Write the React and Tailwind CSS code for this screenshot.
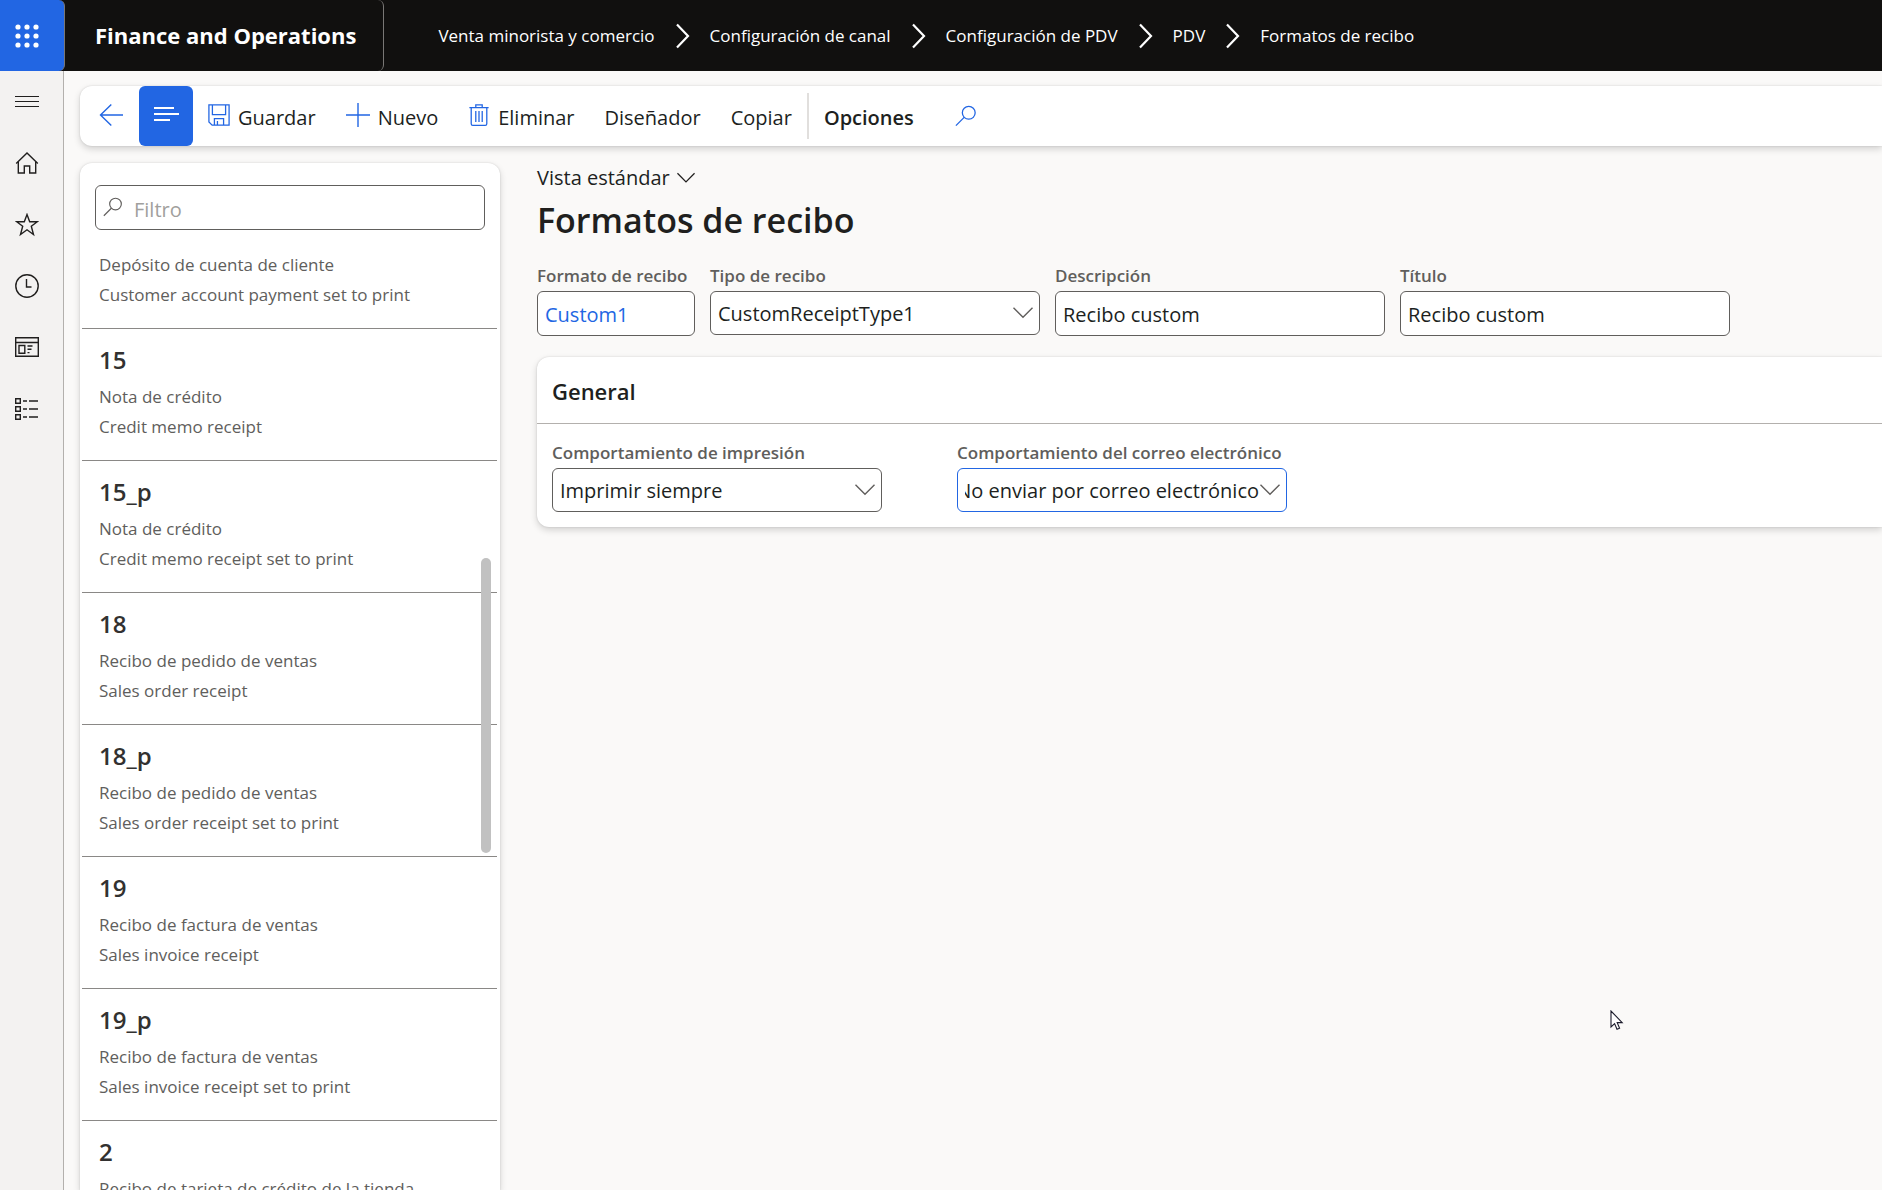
import { useState } from 'react'

const breadcrumbs = [
  'Venta minorista y comercio',
  'Configuración de canal',
  'Configuración de PDV',
  'PDV',
  'Formatos de recibo',
]

const receipts = [
  { id: '15', type: 'Nota de crédito', description: 'Credit memo receipt' },
  { id: '15_p', type: 'Nota de crédito', description: 'Credit memo receipt set to print' },
  { id: '18', type: 'Recibo de pedido de ventas', description: 'Sales order receipt' },
  { id: '18_p', type: 'Recibo de pedido de ventas', description: 'Sales order receipt set to print' },
  { id: '19', type: 'Recibo de factura de ventas', description: 'Sales invoice receipt' },
  { id: '19_p', type: 'Recibo de factura de ventas', description: 'Sales invoice receipt set to print' },
  { id: '2', type: 'Recibo de tarjeta de crédito de la tienda' },
]

function Icon({ className = 'w-6 h-6', children }) {
  return (
    <svg className={`shrink-0 ${className}`} viewBox="0 0 24 24" fill="none" stroke="currentColor" strokeWidth="1.4" aria-hidden="true">
      {children}
    </svg>
  )
}

function Chevron({ className }) {
  return (
    <svg className={className} width="20" height="12" viewBox="0 0 20 12" fill="none" stroke="currentColor" strokeWidth="1.4" aria-hidden="true">
      <path d="M0.5 0.8L10 10.3L19.5 0.8" />
    </svg>
  )
}

function SearchIcon({ className }) {
  return (
    <Icon className={className}>
      <circle cx="15" cy="8.5" r="7" />
      <path d="M10 13.5L1 22.5" />
    </Icon>
  )
}

function AppHeader() {
  return (
    <header className="flex h-[71px] shrink-0 bg-[#11100f] text-white">
      <button aria-label="Iniciador de aplicaciones" className="w-[65px] shrink-0 flex items-center justify-center pr-2.5 bg-[#2266e3] border-r border-[#797775] rounded-r-md">
        <Icon className="w-6 h-6">
          <g fill="currentColor" stroke="none">
            {[3, 12, 21].map((y) => [3, 12, 21].map((x) => <circle key={`${x}-${y}`} cx={x} cy={y} r="2.6" />))}
          </g>
        </Icon>
      </button>
      <div className="flex items-center pl-[30px] pr-[27px] border-r border-[#797775] rounded-r-md">
        <a href="#" className="text-[22px] font-bold whitespace-nowrap">Finance and Operations</a>
      </div>
      <nav aria-label="Ruta" className="flex items-center pl-[54px] text-[17px] whitespace-nowrap">
        {breadcrumbs.map((crumb, i) => (
          <div key={crumb} className="flex items-center">
            {i > 0 && (
              <svg className="mx-5" width="15" height="26" viewBox="0 0 15 26" fill="none" stroke="currentColor" strokeWidth="2.2" aria-hidden="true">
                <path d="M2 1.5L13 13L2 24.5" />
              </svg>
            )}
            <a href="#">{crumb}</a>
          </div>
        ))}
      </nav>
    </header>
  )
}

function SideNav() {
  return (
    <nav aria-label="Navegación" className="w-16 shrink-0 flex flex-col pt-px bg-[#f3f2f1] border-r border-[#b3b0ad] text-[#201f1e]">
      <NavButton label="Menú">
        <path d="M0 5.5H24M0 10.5H24M0 15.5H24" strokeWidth="1.2" />
      </NavButton>
      <NavButton label="Inicio">
        <path d="M1.2 11.5L12 1L22.8 11.5" />
        <path d="M3.3 9.8V21H9.3V14H14.7V21H20.7V9.8" />
      </NavButton>
      <NavButton label="Favoritos">
        <path d="M12 1.5L14.7 8.7H22.3L16.3 13.3L18.5 21.5L12 16.8L5.5 21.5L7.7 13.3L1.7 8.7H9.3Z" />
      </NavButton>
      <NavButton label="Recientes">
        <circle cx="12" cy="12" r="11.2" />
        <path d="M11.5 5V13H16.5" />
      </NavButton>
      <NavButton label="Áreas de trabajo">
        <path d="M0.7 2.7H23.3V21.3H0.7ZM0.7 7.5H23.3" />
        <path d="M4 10.5H9.8V18.3H4ZM12.5 11H17.5M12.5 14.3H16.5M12.5 17.6H14.5" />
      </NavButton>
      <NavButton label="Módulos">
        <path d="M0.7 2.7H5.3V7.3H0.7ZM0.7 10.7H5.3V15.3H0.7ZM0.7 18.7H5.3V23.3H0.7Z" />
        <path d="M8 5H12M14 5H23M8 13H12M14 13H23M8 21H12M14 21H23" />
      </NavButton>
    </nav>
  )
}

function NavButton({ label, children }) {
  return (
    <button aria-label={label} className="h-[61px] flex items-center pl-[15px]">
      <Icon>{children}</Icon>
    </button>
  )
}

function ActionButton({ label, icon, bold }) {
  return (
    <button className="flex items-center gap-2 px-[15px] h-full whitespace-nowrap">
      {icon && <span className="mb-0.5 text-[#2266e3]">{icon}</span>}
      <span className={bold ? 'mt-1 font-semibold' : 'mt-1'}>{label}</span>
    </button>
  )
}

function ActionBar() {
  return (
    <div role="toolbar" className="flex items-center h-[60px] shrink-0 bg-white rounded-l-xl text-[20px] text-[#201f1e] shadow-[0_3px_7px_rgba(0,0,0,0.16),0_0_2px_rgba(0,0,0,0.14)]">
      <button aria-label="Atrás" className="w-[59px] h-full flex items-center pl-[19px] pb-0.5 text-[#2266e3]">
        <Icon>
          <path d="M12.3 1.5L1.5 12L12.3 22.5M1.5 12H24" />
        </Icon>
      </button>
      <button aria-label="Mostrar lista" className="w-[54px] h-full flex items-center justify-center pb-1 rounded-md bg-[#2266e3] text-white">
        <svg width="26" height="16" viewBox="0 0 26 16" fill="none" stroke="currentColor" strokeWidth="2" aria-hidden="true">
          <path d="M1 2H21M1 8H26M1 14H17" />
        </svg>
      </button>
      <ActionButton
        label="Guardar"
        icon={
          <Icon className="w-[22px] h-[22px]">
            <path d="M1 1H23V23H4.5L1 19.5ZM4.8 1V11.5H19.2V1M7 23V16H17V23M10.3 18.5V23" />
          </Icon>
        }
      />
      <ActionButton
        label="Nuevo"
        icon={
          <Icon>
            <path d="M12 0V24M0 12H24" />
          </Icon>
        }
      />
      <ActionButton
        label="Eliminar"
        icon={
          <Icon className="w-[22px] h-6">
            <path d="M1.5 4H22.5M8.5 4V1H15.5V4M3.5 4V21.5Q3.5 23.2 5.2 23.2H18.8Q20.5 23.2 20.5 21.5V4M8.5 7.5V19.5M12 7.5V19.5M15.5 7.5V19.5" />
          </Icon>
        }
      />
      <ActionButton label="Diseñador" />
      <ActionButton label="Copiar" />
      <div className="w-0.5 h-[46px] bg-[#e1dfdd]" />
      <ActionButton label="Opciones" bold />
      <button aria-label="Buscar" className="h-full px-[26px] text-[#2266e3]">
        <SearchIcon className="w-[22px] h-[22px]" />
      </button>
    </div>
  )
}

function ReceiptLines({ type, description }) {
  return (
    <div className="text-[17px] leading-[30px] text-[#605e5c] whitespace-nowrap">
      <p>{type}</p>
      {description && <p>{description}</p>}
    </div>
  )
}

function ReceiptList() {
  return (
    <aside className="relative w-[420px] shrink-0 flex flex-col bg-white rounded-t-xl shadow-[0_3px_7px_rgba(0,0,0,0.16),0_0_2px_rgba(0,0,0,0.14)] overflow-hidden">
      <div className="relative mx-[15px] mt-[22px]">
        <SearchIcon className="absolute left-2 top-3 w-5 h-5 text-[#605e5c]" />
        <input
          type="text"
          aria-label="Filtro"
          placeholder="Filtro"
          className="w-full h-[45px] pl-[38px] pr-2 pt-1 border border-[#605e5c] rounded-md text-[20px] placeholder-[#a19f9d]"
        />
      </div>
      <ul className="pl-0.5 pr-[3px] pt-5">
        <li className="pl-[17px] pb-[18px] border-b border-[#8a8886]">
          <ReceiptLines type="Depósito de cuenta de cliente" description="Customer account payment set to print" />
        </li>
        {receipts.map((receipt) => (
          <li key={receipt.id} className="border-b border-[#8a8886]">
            <button className="w-full pl-[17px] pt-3 pb-[18px] text-left">
              <h2 className="mb-[3px] text-[24px] leading-[38px] font-semibold text-[#323130]">{receipt.id}</h2>
              <ReceiptLines type={receipt.type} description={receipt.description} />
            </button>
          </li>
        ))}
      </ul>
      {/* scrollbar thumb */}
      <div className="absolute right-[9px] top-[395px] w-2.5 h-[295px] rounded-full bg-[#c1c1c1]" />
    </aside>
  )
}

function Field({ id, label, width = 'w-[330px]', children }) {
  return (
    <div className={width}>
      <label htmlFor={id} className="block mb-[3px] text-[17px] leading-6 font-semibold text-[#605e5c] whitespace-nowrap">
        {label}
      </label>
      {children}
    </div>
  )
}

function TextField({ id, label, value, width, color = 'text-[#201f1e]' }) {
  const [text, setText] = useState(value)
  return (
    <Field id={id} label={label} width={width}>
      <input
        id={id}
        type="text"
        value={text}
        onChange={(e) => setText(e.target.value)}
        className={`block w-full h-[45px] px-[7px] pt-0.5 bg-white border border-[#605e5c] rounded-md text-[20px] ${color}`}
      />
    </Field>
  )
}

function SelectField({ id, label, value, active }) {
  return (
    <Field id={id} label={label}>
      <div className="relative">
        {/* the active box keeps the end of a long value in view */}
        <select
          id={id}
          defaultValue={value}
          className={`block w-full h-11 pt-0.5 appearance-none bg-white border rounded-md text-[20px] text-[#201f1e] ${
            active ? 'border-[#2266e3] pl-[7px] pr-[27px] [direction:rtl]' : 'border-[#605e5c] pl-[7px] pr-8'
          }`}
        >
          <option>{value}</option>
        </select>
        <Chevron className="absolute right-[7px] top-4 text-[#605e5c] pointer-events-none" />
      </div>
    </Field>
  )
}

function ReceiptDetail() {
  return (
    <main className="flex-1 min-w-0 pt-px text-[#201f1e]">
      <button className="flex items-center gap-[7px] text-[20px] leading-7">
        Vista estándar
        <Chevron className="w-[18px]" />
      </button>
      <h1 className="mt-1 text-[34px] leading-[48px] font-semibold">Formatos de recibo</h1>
      <div className="flex gap-[15px] mt-5">
        <TextField id="format" label="Formato de recibo" value="Custom1" width="w-[158px]" color="text-[#2266e3]" />
        <SelectField id="type" label="Tipo de recibo" value="CustomReceiptType1" />
        <TextField id="description" label="Descripción" value="Recibo custom" />
        <TextField id="title" label="Título" value="Recibo custom" />
      </div>
      <section className="mt-[21px] bg-white rounded-l-xl shadow-[0_3px_7px_rgba(0,0,0,0.16),0_0_2px_rgba(0,0,0,0.14)]">
        <h2 className="flex items-center h-[67px] pl-[15px] pt-0.5 border-b border-[#b3b0ad] text-[22px] font-semibold">General</h2>
        <div className="flex gap-[75px] px-[15px] pt-[17px] pb-[15px]">
          <SelectField id="print" label="Comportamiento de impresión" value="Imprimir siempre" />
          <SelectField id="email" label="Comportamiento del correo electrónico" value="No enviar por correo electrónico" active />
        </div>
      </section>
    </main>
  )
}

function App() {
  return (
    <div className="relative h-screen flex flex-col overflow-hidden bg-[#faf9f8] font-['Open_Sans','Noto_Sans',sans-serif]">
      <AppHeader />
      <div className="flex flex-1 min-h-0">
        <SideNav />
        <div className="flex-1 min-w-0 flex flex-col pl-4 pt-[15px]">
          <ActionBar />
          <div className="flex flex-1 min-h-0 gap-[37px] pt-[17px]">
            <ReceiptList />
            <ReceiptDetail />
          </div>
        </div>
      </div>
      {/* mouse pointer */}
      <svg className="absolute left-[1610px] top-[1010px]" width="14" height="21" viewBox="0 0 14 21" aria-hidden="true">
        <path d="M1 1V17L4.6 13.6L7 19.3L9.6 18.2L7.2 12.6H12.2Z" fill="#fff" stroke="#1b1b2b" strokeWidth="1.1" />
      </svg>
    </div>
  )
}

export default App
